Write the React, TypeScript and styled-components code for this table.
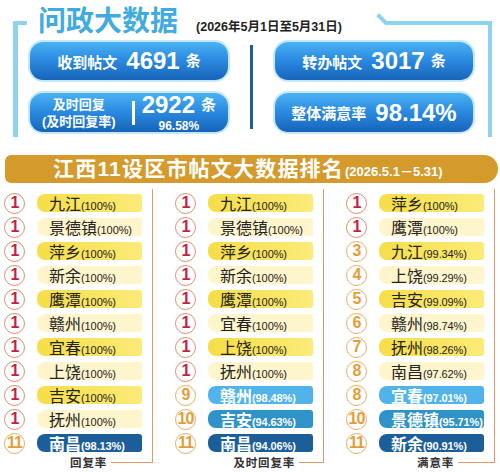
import React from 'react';
import styled, { createGlobalStyle, css } from 'styled-components';

const GlobalStyle = createGlobalStyle`
  html, body {
    margin: 0;
    padding: 0;
    background: #fff;
  }
  body {
    font-family: "Liberation Sans", "Noto Sans CJK SC", sans-serif;
  }
`;

const FRAME = '#8fd2f0';
const LINE = '#e3976a';

const Page = styled.div`
  width: 500px;
  height: 472px;
  overflow: hidden;
  background: #fff;
`;

const Header = styled.div`
  position: relative;
  height: 140px;

  &::before {
    content: '';
    position: absolute;
    left: 13px;
    top: 21px;
    width: 9px;
    height: 112px;
    border-left: 5px solid ${FRAME};
    border-top: 4px solid ${FRAME};
  }
  &::after {
    content: '';
    position: absolute;
    left: 385px;
    top: 21px;
    width: 103px;
    height: 112px;
    border-top: 4px solid ${FRAME};
    border-right: 4px solid ${FRAME};
  }
`;

const Hook = styled.div`
  position: absolute;
  left: 376px;
  top: 17px;
  width: 12px;
  height: 4px;
  background: ${FRAME};
  transform: rotate(45deg);
`;

const TitleRow = styled.div`
  display: flex;
  align-items: baseline;
  gap: 18px;
  height: 38px;
  padding: 2px 0 0 38px;
  box-sizing: border-box;
`;

const Title = styled.div`
  font-family: "Noto Sans CJK SC", sans-serif;
  font-size: 28px;
  font-weight: 700;
  line-height: 34px;
  color: #3fabe0;
`;

const Subtitle = styled.div`
  font-size: 12.5px;
  font-weight: 700;
  color: #222;
`;

const StatsGrid = styled.div`
  display: grid;
  grid-template-columns: 198px 47px 198px;
  grid-template-rows: 38px 39px;
  row-gap: 13px;
  padding-left: 30px;
  margin-top: 4px;
`;

const Divider = styled.div`
  grid-column: 2;
  grid-row: 1 / span 2;
  justify-self: center;
  width: 3px;
  margin: 3px 0;
  background: #1d5f9c;
`;

const Pill = styled.div`
  display: flex;
  align-items: center;
  justify-content: center;
  border-radius: 13px;
  background: linear-gradient(180deg, #4ab2f2 0%, #2c8ce2 45%, #1664b9 100%);
  box-shadow: 0 0 0 2px #c4e8f8;
  color: #fff;
  font-weight: 700;
`;

const PillLabel = styled.span`
  font-size: 15px;
  margin-right: 9px;
`;

const BigNum = styled.span`
  font-size: 24px;
  line-height: 22px;
`;

const Unit = styled.span`
  font-size: 15px;
  line-height: 18px;
  margin-left: 6px;
`;

const TwoLine = styled.div`
  display: flex;
  flex-direction: column;
  align-items: center;
  font-size: 13px;
  line-height: 17px;
`;

const WhiteBar = styled.div`
  width: 3px;
  height: 24px;
  background: #fff;
  margin: 0 7px 0 16px;
`;

const NumStack = styled.div`
  display: flex;
  flex-direction: column;
  align-items: center;
`;

const NumLine = styled.div`
  display: flex;
  align-items: center;
  height: 22px;
`;

const SmallPct = styled.div`
  font-size: 12px;
  line-height: 12px;
  margin-top: 4px;
`;

const Banner = styled.div`
  display: flex;
  align-items: baseline;
  height: 28px;
  margin: 15px 2px 0 5px;
  padding-left: 48px;
  box-sizing: border-box;
  border-radius: 6px 14px 14px 6px;
  background: #d49b2c;
  color: #fff;
  font-weight: 700;
`;

const BannerTitle = styled.span`
  font-size: 21px;
  line-height: 28px;
  letter-spacing: 1.2px;
`;

const BannerDate = styled.span`
  font-size: 13px;
  margin-left: 1px;
`;

const Ranking = styled.div`
  display: grid;
  grid-template-columns: repeat(3, 149px);
  column-gap: 22px;
  padding-left: 4px;
  margin-top: 6px;
`;

const Column = styled.div`
  display: flex;
  flex-direction: column;
`;

const List = styled.div`
  display: flex;
  flex-direction: column;
  gap: 6px;
  padding: 5px 0 5px;
  border-right: 1px solid ${LINE};
`;

const Row = styled.div`
  display: flex;
  align-items: center;
  height: 18px;
`;

const Rank = styled.div<{ $top: boolean }>`
  width: 21px;
  height: 21px;
  box-sizing: border-box;
  border-radius: 50%;
  display: flex;
  align-items: center;
  justify-content: center;
  margin-right: 12px;
  background: #fff;
  font-size: 16px;
  font-weight: 700;
  letter-spacing: -1px;
  ${(p) =>
    p.$top
      ? css`
          border: 1.5px solid #e08a6a;
          color: #c81e46;
        `
      : css`
          border: 1.5px solid #e9ab62;
          color: #e39d3a;
        `}
`;

type Tone = 'bright' | 'pale' | 'light' | 'mid' | 'dark';

const toneBg: Record<Tone, string> = {
  bright: 'linear-gradient(90deg, #f6de48, #fbeb78)',
  pale: '#fef5cc',
  light: '#52b3ea',
  mid: '#2f92c8',
  dark: '#1c5e9a',
};

const Bar = styled.div<{ $tone: Tone }>`
  display: flex;
  align-items: baseline;
  width: 105px;
  height: 18px;
  box-sizing: border-box;
  padding-left: 12px;
  border-radius: 8px 3px 3px 8px;
  background: ${(p) => toneBg[p.$tone]};
  white-space: nowrap;
  color: ${(p) => (p.$tone === 'bright' || p.$tone === 'pale' ? '#222' : '#fff')};
  font-weight: ${(p) => (p.$tone === 'bright' || p.$tone === 'pale' ? 400 : 700)};
`;

const City = styled.span`
  font-family: "Noto Sans CJK SC", sans-serif;
  font-size: 16px;
  line-height: 18px;
`;

const Pct = styled.span`
  font-size: 11px;
  letter-spacing: -0.1px;
`;

const Footer = styled.div`
  display: flex;
  justify-content: flex-end;
  align-items: flex-start;
  height: 12px;
`;

const FooterLabel = styled.span`
  font-size: 11.5px;
  line-height: 12px;
  font-weight: 700;
  color: #333;
  letter-spacing: 0.8px;
  margin-right: 4px;
`;

const Rule = styled.div<{ $w: number }>`
  width: ${(p) => p.$w}px;
  height: 6px;
  box-sizing: border-box;
  border-bottom: 1px solid ${LINE};
  border-right: 1px solid ${LINE};
`;

type Item = { rank: number; city: string; pct: string; tone?: Tone };

const columns: { label: string; rule: number; items: Item[] }[] = [
  {
    label: '回复率',
    rule: 42,
    items: [
      { rank: 1, city: '九江', pct: '100%' },
      { rank: 1, city: '景德镇', pct: '100%' },
      { rank: 1, city: '萍乡', pct: '100%' },
      { rank: 1, city: '新余', pct: '100%' },
      { rank: 1, city: '鹰潭', pct: '100%' },
      { rank: 1, city: '赣州', pct: '100%' },
      { rank: 1, city: '宜春', pct: '100%' },
      { rank: 1, city: '上饶', pct: '100%' },
      { rank: 1, city: '吉安', pct: '100%' },
      { rank: 1, city: '抚州', pct: '100%' },
      { rank: 11, city: '南昌', pct: '98.13%', tone: 'dark' },
    ],
  },
  {
    label: '及时回复率',
    rule: 25,
    items: [
      { rank: 1, city: '九江', pct: '100%' },
      { rank: 1, city: '景德镇', pct: '100%' },
      { rank: 1, city: '萍乡', pct: '100%' },
      { rank: 1, city: '新余', pct: '100%' },
      { rank: 1, city: '鹰潭', pct: '100%' },
      { rank: 1, city: '宜春', pct: '100%' },
      { rank: 1, city: '上饶', pct: '100%' },
      { rank: 1, city: '抚州', pct: '100%' },
      { rank: 9, city: '赣州', pct: '98.48%', tone: 'light' },
      { rank: 10, city: '吉安', pct: '94.63%', tone: 'mid' },
      { rank: 11, city: '南昌', pct: '94.06%', tone: 'dark' },
    ],
  },
  {
    label: '满意率',
    rule: 37,
    items: [
      { rank: 1, city: '萍乡', pct: '100%' },
      { rank: 1, city: '鹰潭', pct: '100%' },
      { rank: 3, city: '九江', pct: '99.34%' },
      { rank: 4, city: '上饶', pct: '99.29%' },
      { rank: 5, city: '吉安', pct: '99.09%' },
      { rank: 6, city: '赣州', pct: '98.74%' },
      { rank: 7, city: '抚州', pct: '98.26%' },
      { rank: 8, city: '南昌', pct: '97.62%' },
      { rank: 8, city: '宜春', pct: '97.01%', tone: 'light' },
      { rank: 10, city: '景德镇', pct: '95.71%', tone: 'mid' },
      { rank: 11, city: '新余', pct: '90.91%', tone: 'dark' },
    ],
  },
];

export default function App() {
  return (
    <Page>
      <GlobalStyle />
      <Header>
        <Hook />
        <TitleRow>
          <Title>问政大数据</Title>
          <Subtitle>(2026年5月1日至5月31日)</Subtitle>
        </TitleRow>
        <StatsGrid>
          <Pill>
            <PillLabel>收到帖文</PillLabel>
            <BigNum>4691</BigNum>
            <Unit>条</Unit>
          </Pill>
          <Divider />
          <Pill>
            <PillLabel>转办帖文</PillLabel>
            <BigNum>3017</BigNum>
            <Unit>条</Unit>
          </Pill>
          <Pill>
            <TwoLine>
              <span>及时回复</span>
              <span>(及时回复率)</span>
            </TwoLine>
            <WhiteBar />
            <NumStack>
              <NumLine>
                <BigNum>2922</BigNum>
                <Unit>条</Unit>
              </NumLine>
              <SmallPct>96.58%</SmallPct>
            </NumStack>
          </Pill>
          <Pill>
            <PillLabel>整体满意率</PillLabel>
            <BigNum>98.14%</BigNum>
          </Pill>
        </StatsGrid>
      </Header>

      <Banner>
        <BannerTitle>江西11设区市帖文大数据排名</BannerTitle>
        <BannerDate>(2026.5.1－5.31)</BannerDate>
      </Banner>

      <Ranking>
        {columns.map((col) => (
          <Column key={col.label}>
            <List>
              {col.items.map((it, i) => (
                <Row key={i}>
                  <Rank $top={it.rank === 1}>{it.rank}</Rank>
                  <Bar $tone={it.tone ?? (i % 2 === 0 ? 'bright' : 'pale')}>
                    <City>{it.city}</City>
                    <Pct>({it.pct})</Pct>
                  </Bar>
                </Row>
              ))}
            </List>
            <Footer>
              <FooterLabel>{col.label}</FooterLabel>
              <Rule $w={col.rule} />
            </Footer>
          </Column>
        ))}
      </Ranking>
    </Page>
  );
}
